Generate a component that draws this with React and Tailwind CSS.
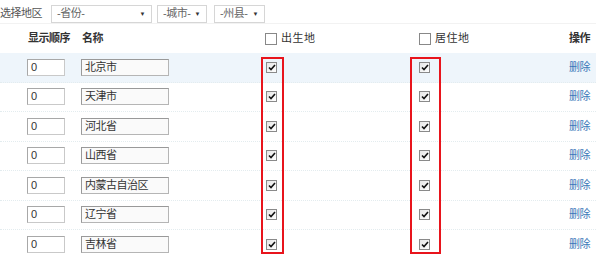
import React from "react";

const rows = ["北京市", "天津市", "河北省", "山西省", "内蒙古自治区", "辽宁省", "吉林省"];

function Check({ checked }) {
  return (
    <span className="inline-flex w-[11px] h-[11px] border border-[#8a8a8a] bg-gradient-to-br from-[#e6e6e6] to-white items-center justify-center">
      {checked && (
        <svg width="8" height="7" viewBox="0 0 8 7">
          <path d="M1 3.5 L3 5.5 L7 1" stroke="#111" strokeWidth="1.6" fill="none" />
        </svg>
      )}
    </span>
  );
}

function Select({ label, w }) {
  return (
    <div className={`flex items-center justify-between h-[18px] border border-[#d6d6d6] bg-white pl-[5px] pr-[6px] text-[#666] ${w}`}>
      <span>{label}</span>
      <span className="text-[6px] text-[#333]">▼</span>
    </div>
  );
}

export default function App() {
  return (
    <div
      className="relative w-[600px] h-[255px] overflow-hidden bg-white text-[11px] tracking-[-0.5px] leading-none text-[#444]"
      style={{ fontFamily: '"Liberation Sans", "Noto Sans CJK SC", sans-serif' }}
    >
      <div className="flex items-center h-[24px] pt-[5px] pb-[1px] border-b border-[#f2f2f2] w-[596px]">
        <span className="text-[#555] w-[51px]">选择地区</span>
        <Select label="-省份-" w="w-[101px]" />
        <div className="w-[5px]" />
        <Select label="-城市-" w="w-[50px]" />
        <div className="w-[7px]" />
        <Select label="-州县-" w="w-[51px]" />
      </div>
      <div className="flex items-center h-[29px] w-[596px] text-[#333]">
        <div className="w-[28px]" />
        <div className="w-[54px] font-bold">显示顺序</div>
        <div className="w-[183px] font-bold">名称</div>
        <div className="w-[154px] flex items-center gap-[4px]">
          <span className="w-[12px] h-[12px] border border-[#888] bg-white" />
          <span className="tracking-[0.5px]">出生地</span>
        </div>
        <div className="w-[150px] flex items-center gap-[4px]">
          <span className="w-[12px] h-[12px] border border-[#888] bg-white" />
          <span className="tracking-[0.5px]">居住地</span>
        </div>
        <div className="font-semibold">操作</div>
      </div>
      {rows.map((name, i) => (
        <div
          key={name}
          className={`flex items-center h-[29.5px] w-[596px] border-b border-dotted border-[#e3ecef] ${i === 0 ? "bg-[#eef5fb]" : ""}`}
        >
          <div className="w-[27px]" />
          <div className="w-[54px]">
            <div className="w-[38px] h-[17px] border border-[#c9c9c9] border-t-[#a8a8a8] border-l-[#a8a8a8] bg-white flex items-center pl-[3px] text-[#333]">0</div>
          </div>
          <div className="w-[184px]">
            <div className="w-[88px] h-[17px] border border-[#b5b5b5] border-t-[#999] border-l-[#999] bg-[#fafafa] flex items-center pl-[3px] text-[#333]">{name}</div>
          </div>
          <div className="w-[154px] flex pl-[1px]">
            <Check checked />
          </div>
          <div className="w-[150px] flex">
            <Check checked />
          </div>
          <div className="text-[#3a78b8]">删除</div>
        </div>
      ))}
      <div className="absolute left-[261px] top-[57px] w-[23px] h-[197px] border-2 border-[#e8141c]" />
      <div className="absolute left-[410px] top-[57px] w-[31px] h-[197px] border-2 border-[#e8141c]" />
    </div>
  );
}
